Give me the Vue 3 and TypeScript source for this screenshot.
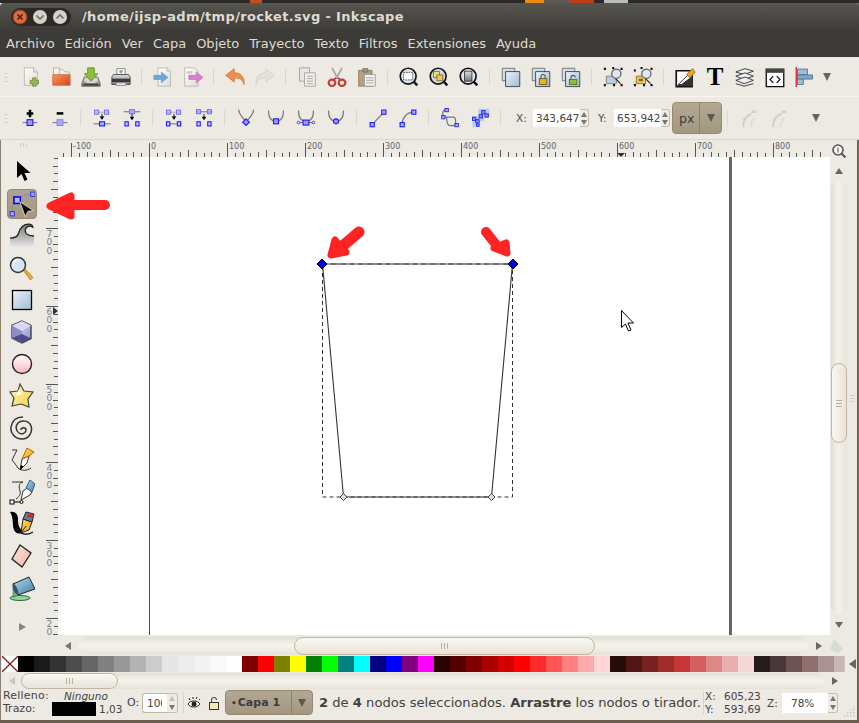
<script setup lang="ts">
const menus: string[] = ['Archivo', 'Edición', 'Ver', 'Capa', 'Objeto', 'Trayecto', 'Texto', 'Filtros', 'Extensiones', 'Ayuda']

const swatches: string[] = [
  '#000000', '#1a1a1a', '#333333', '#4d4d4d', '#666666', '#808080', '#999999', '#b3b3b3', '#cccccc', '#e6e6e6', '#ececec', '#f2f2f2', '#f9f9f9', '#ffffff',
  '#800000', '#ff0000', '#808000', '#ffff00', '#008000', '#00ff00', '#008080', '#00ffff', '#000080', '#0000ff', '#800080', '#ff00ff',
  '#2b0000', '#550000', '#800000', '#aa0000', '#d40000', '#ff0000', '#ff2a2a', '#ff5555', '#ff8080', '#ffaaaa', '#ffd5d5',
  '#280b0b', '#501616', '#782121', '#a02c2c', '#c83737', '#d35f5f', '#de8787', '#e9afaf', '#f4d7d7',
  '#241c1c', '#483737', '#6c5353', '#916f6f', '#ac9393', '#c8b7b7'
]

interface Tick { p: number; from: number }

const hTicks: Tick[] = []
for (let k = -12; k <= 86; k++) {
  const m = ((k % 10) + 10) % 10
  hTicks.push({ p: Math.round(149 + k * 7.8) + 0.5, from: m === 0 ? 3 : m === 5 ? 10 : m % 2 === 0 ? 12 : 13 })
}
const vTicks: Tick[] = []
for (let j = -9; j <= 52; j++) {
  const m = ((j % 10) + 10) % 10
  vTicks.push({ p: Math.round(228 + j * 7.8) + 0.5, from: m === 0 ? 0 : m === 5 ? 5 : m % 2 === 0 ? 7 : 8 })
}
const hLabels = [-100, 0, 100, 200, 300, 400, 500, 600, 700, 800].map((v) => ({
  text: String(v),
  x: Math.round(149 + v * 0.78) + 2
}))
const vLabels = [700, 600, 500, 400, 300, 200].map((v) => ({
  digits: String(v).split(''),
  y: Math.round(228 + (700 - v) * 0.78)
}))
</script>

<template>
  <div class="win">
    <svg class="defs" width="0" height="0">
      <defs>
        <linearGradient id="gBlue" x1="0" y1="0" x2="1" y2="1"><stop offset="0" stop-color="#eef3f8" /><stop offset="1" stop-color="#9dbcd6" /></linearGradient>
        <linearGradient id="gTeal" x1="0" y1="0" x2="1" y2="1"><stop offset="0" stop-color="#b4d8ea" /><stop offset="1" stop-color="#3f7fa6" /></linearGradient>
        <linearGradient id="gDoc" x1="0" y1="0" x2="1" y2="1"><stop offset="0" stop-color="#ffffff" /><stop offset="1" stop-color="#dfdcd6" /></linearGradient>
        <linearGradient id="gOrange" x1="0" y1="0" x2="1" y2="1"><stop offset="0" stop-color="#f79a5a" /><stop offset="1" stop-color="#d8401c" /></linearGradient>
        <linearGradient id="gGray" x1="0" y1="0" x2="0" y2="1"><stop offset="0" stop-color="#dddddd" /><stop offset="1" stop-color="#777777" /></linearGradient>
        <linearGradient id="gWave" x1="0" y1="0" x2="0" y2="1"><stop offset="0" stop-color="#777777" /><stop offset="1" stop-color="#ececec" /></linearGradient>
        <linearGradient id="gPink" x1="0" y1="0" x2="0" y2="1"><stop offset="0" stop-color="#ffffff" /><stop offset="1" stop-color="#ffb6c0" /></linearGradient>
        <linearGradient id="gPurple" x1="0" y1="0" x2="1" y2="1"><stop offset="0" stop-color="#e4e4fa" /><stop offset="1" stop-color="#8e8ed0" /></linearGradient>
        <linearGradient id="gYellow" x1="0" y1="0" x2="1" y2="1"><stop offset="0" stop-color="#ffe066" /><stop offset="1" stop-color="#f19a10" /></linearGradient>
        <linearGradient id="gStar" x1="0" y1="0" x2="1" y2="1"><stop offset="0" stop-color="#fff7c0" /><stop offset="1" stop-color="#f6cf4a" /></linearGradient>
        <linearGradient id="gSalmon" x1="0" y1="0" x2="1" y2="1"><stop offset="0" stop-color="#fbe6de" /><stop offset="1" stop-color="#eeb4a2" /></linearGradient>
      </defs>
    </svg>

    <div class="panel"></div>

    <div class="titlebar">
      <svg class="winbtns" width="60" height="18" viewBox="0 0 60 18">
        <rect x="0" y="0" width="60" height="18" rx="9" fill="#2b2a26" />
        <circle cx="9" cy="9" r="7" fill="#dd6a3c" stroke="#8d3a1a" />
        <path d="M6.5 6.5l5 5M11.5 6.5l-5 5" stroke="#4a2212" stroke-width="1.6" />
        <circle cx="29" cy="9" r="7" fill="#d6d2c9" />
        <path d="M25.5 7.5L29 11l3.5-3.5" fill="none" stroke="#6e6b63" stroke-width="1.6" />
        <circle cx="49" cy="9" r="7" fill="#d6d2c9" />
        <path d="M45.5 10.5L49 7l3.5 3.5" fill="none" stroke="#6e6b63" stroke-width="1.6" />
      </svg>
      <span class="title">/home/ijsp-adm/tmp/rocket.svg - Inkscape</span>
    </div>

    <div class="menubar">
      <span v-for="m in menus" :key="m" class="menu">{{ m }}</span>
    </div>

    <div class="toolbar tb1">
      <span class="grip"></span>
      <span class="btn"><svg viewBox="0 0 24 24"><path d="M4 1h11l5 5v16H4z" fill="url(#gDoc)" stroke="#b5b3ad" /><path d="M15 1v5h5" fill="#e8e6e0" stroke="#b5b3ad" /><path d="M14 13h4v3h3v4h-3v3h-4v-3h-3v-4h3z" fill="#92b852" stroke="#6b8f34" /></svg></span>
      <span class="btn"><svg viewBox="0 0 24 24"><path d="M6 3h8l3 3h5v6H6z" fill="#f3f0ea" stroke="#b7a898" /><path d="M3 1h7v9H3z" fill="#f5f2ec" stroke="#b7a898" /><path d="M2 9h21v13H2z" fill="url(#gOrange)" stroke="#c9805a" /></svg></span>
      <span class="btn"><svg viewBox="0 0 24 24"><path d="M4 12h16l3 8v3H1v-3z" fill="url(#gGray)" stroke="#555" /><ellipse cx="12" cy="16" rx="8" ry="3.5" fill="#d5d5d0" /><path d="M8 1h8v7h4l-8 9-8-9h4z" fill="#8fbf3a" stroke="#5f8d1e" /><rect x="3" y="20" width="18" height="2" fill="#3c3c3c" /></svg></span>
      <span class="btn"><svg viewBox="0 0 24 24"><path d="M7 2h10v7H7z" fill="#fff" stroke="#777" /><path d="M10 4h4v2l-2 2-2-2z" fill="#999" /><path d="M3 9h18l2 3v9H1v-9z" fill="url(#gGray)" stroke="#444" /><path d="M1 14h22v4H1z" fill="#3a3a3a" /><path d="M6 19h12v3H6z" fill="#f4f4f4" stroke="#777" /></svg></span>
      <span class="sep"></span>
      <span class="btn"><svg viewBox="0 0 24 24"><path d="M6 1h11l4 4v18H6z" fill="url(#gDoc)" stroke="#b5b3ad" /><path d="M17 1v4h4" fill="#e6e4de" stroke="#b5b3ad" /><path d="M1 10h9V6l8 6.5-8 6.5v-4H1z" fill="#72a4d4" stroke="#5b8fc0" stroke-width=".6" /></svg></span>
      <span class="btn"><svg viewBox="0 0 24 24"><path d="M2 1h12l4 4v18H2z" fill="url(#gDoc)" stroke="#b5b3ad" /><path d="M4 5h7v3H4z" fill="#d9c7c0" /><path d="M7 10h9V6l8 6.5-8 6.5v-4H7z" fill="#d67ed0" stroke="#b55fb0" stroke-width=".6" /></svg></span>
      <span class="sep"></span>
      <span class="btn"><svg viewBox="0 0 24 24"><path d="M1 10l10-8v5c7 0 12 3 12 14-2-6-5-8-12-8v5z" fill="#ee9050" stroke="#d2702c" /></svg></span>
      <span class="btn"><svg viewBox="0 0 24 24"><path d="M23 10L13 2v5C6 7 1 10 1 21c2-6 5-8 12-8v5z" fill="#e4e2dc" stroke="#d3d0c9" /></svg></span>
      <span class="sep"></span>
      <span class="btn"><svg viewBox="0 0 24 24"><path d="M3 1h12v16H3z" fill="#e7e7e5" stroke="#9b9b98" /><path d="M9 7h13v16H9z" fill="#f2f2f0" stroke="#9b9b98" /><path d="M11.5 11h8M11.5 14h8M11.5 17h8M11.5 20h8" stroke="#999" /></svg></span>
      <span class="btn"><svg viewBox="0 0 24 24"><path d="M6 1l7 13M18 1l-7 13" stroke="#a8a8a6" stroke-width="2.2" /><path d="M11 13l-4 3M13 13l4 3" stroke="#b52a2a" stroke-width="2" /><ellipse cx="6" cy="19" rx="4" ry="3.8" fill="none" stroke="#c43a36" stroke-width="2.6" /><ellipse cx="18" cy="19" rx="4" ry="3.8" fill="none" stroke="#c43a36" stroke-width="2.6" /></svg></span>
      <span class="btn"><svg viewBox="0 0 24 24"><path d="M2 4h16v19H2z" fill="#b89f7c" stroke="#8c7658" /><path d="M7 2h6v4H7z" fill="#a89a8a" stroke="#666" /><path d="M9 9h13v14H9z" fill="#f2f2ee" stroke="#999" /><path d="M11 13h9M11 16h9M11 19h9" stroke="#999" /></svg></span>
      <span class="sep"></span>
      <span class="btn"><svg viewBox="0 0 24 24"><path d="M17 17l5 5" stroke="#111" stroke-width="3" /><circle cx="11" cy="11" r="9.5" fill="#dbe7f0" stroke="#111" stroke-width="2" /><rect x="5.5" y="6.5" width="11" height="9" fill="#fff" stroke="#444" stroke-dasharray="2 1" /></svg></span>
      <span class="btn"><svg viewBox="0 0 24 24"><path d="M17 17l5 5" stroke="#111" stroke-width="3" /><circle cx="11" cy="11" r="9.5" fill="#cbd9e4" stroke="#111" stroke-width="2" /><rect x="5.5" y="5.5" width="7" height="7" fill="#f7dd7a" stroke="#7a6a30" /><rect x="9.5" y="9.5" width="7" height="7" fill="#f2c64a" stroke="#7a6a30" /></svg></span>
      <span class="btn"><svg viewBox="0 0 24 24"><path d="M17 17l5 5" stroke="#111" stroke-width="3" /><circle cx="11" cy="11" r="9.5" fill="#dbe7f0" stroke="#111" stroke-width="2" /><rect x="6.5" y="5" width="9" height="12" fill="url(#gGray)" stroke="#333" /></svg></span>
      <span class="sep"></span>
      <span class="btn"><svg viewBox="0 0 24 24"><path d="M1.500 1.500h15v15h-15z" fill="#cfdde9" stroke="#666" /><path d="M5.500 5.500h17v18h-17z" fill="url(#gBlue)" stroke="#333" /></svg></span>
      <span class="btn"><svg viewBox="0 0 24 24"><path d="M1.500 1.500h15v15h-15z" fill="#cfdde9" stroke="#666" /><path d="M5.500 5.500h17v18h-17z" fill="url(#gBlue)" stroke="#333" /><rect x="10" y="14" width="9" height="7" fill="#e6b422" stroke="#6b5410" /><path d="M12 14v-2.500a2.500 2.500 0 015 0V14" fill="none" stroke="#555" stroke-width="1.300" /></svg></span>
      <span class="btn"><svg viewBox="0 0 24 24"><path d="M1.500 1.500h15v15h-15z" fill="#cfdde9" stroke="#666" /><path d="M5.500 5.500h17v18h-17z" fill="url(#gBlue)" stroke="#333" /><rect x="10" y="15" width="9" height="6" fill="#8fbf3a" stroke="#4f6f1c" /><path d="M12 15v-2.500a2.500 2.500 0 015 0" fill="none" stroke="#555" stroke-width="1.300" /></svg></span>
      <span class="sep"></span>
      <span class="btn"><svg viewBox="0 0 24 24"><path d="M4 11h12v9H4z" fill="#b8cde0" stroke="#777" /><path d="M15 14l6 6" stroke="#222" stroke-width="1.500" /><circle cx="16" cy="8" r="5.500" fill="#dfe8f0" stroke="#555" stroke-width="1.400" /><path d="M1 1h2.500v2.500H1zM11 0h2.500v2.500H11zM21 1h2.500v2.500H21zM1 20.500h2.500V23H1zM12 20.500h2.500V23H12zM21 20.500h2.500V23H21z" fill="#111" /></svg></span>
      <span class="btn"><svg viewBox="0 0 24 24"><path d="M4 11h11v9H4z" fill="#f0c84a" stroke="#7a6a30" /><rect x="7" y="14" width="5" height="3" fill="#7a6a30" /><path d="M15 14l6 6" stroke="#222" stroke-width="1.500" /><circle cx="16" cy="8" r="5.500" fill="#dfe8f0" stroke="#555" stroke-width="1.400" /><path d="M1 3h2.500v2.500H1zM9 0h2.500v2.500H9zM21 1h2.500v2.500H21zM1 20.500h2.500V23H1zM12 20.500h2.500V23H12zM21 20.500h2.500V23H21z" fill="#111" /></svg></span>
      <span class="sep"></span>
      <span class="btn"><svg viewBox="0 0 24 24"><path d="M1.500 4.500h19v19h-19z" fill="#fff" stroke="#111" stroke-width="2" /><path d="M2 23L20 5v18z" fill="#333" /><path d="M4 21l12-12 4 3-12 9z" fill="#fff" stroke="#222" /><path d="M14 9l7-7 3 4-6 7z" fill="#f3a81c" stroke="#8a5a10" /></svg></span>
      <span class="btn"><svg viewBox="0 0 24 24"><text x="12" y="22" text-anchor="middle" class="bigt">T</text></svg></span>
      <span class="btn"><svg viewBox="0 0 24 24"><path d="M1 6l11-4 10 3-11 4z" fill="#eee" stroke="#222" /><path d="M1 11l11-4 10 4-11 4z" fill="#eee" stroke="#222" /><path d="M1 16l11-4 10 4-11 4z" fill="#eee" stroke="#222" /><path d="M1 20l10 3 11-3" fill="none" stroke="#222" /></svg></span>
      <span class="btn"><svg viewBox="0 0 24 24"><path d="M1.500 2.500h21v21h-21z" fill="#fff" stroke="#111" stroke-width="1.600" /><path d="M1 3h22v4H1z" fill="#444" /><path d="M10 11l-4 4 4 4M14 11l4 4-4 4" fill="none" stroke="#111" stroke-width="1.400" /></svg></span>
      <span class="btn"><svg viewBox="0 0 24 24"><path d="M1.500 0v24" stroke="#d22" stroke-width="1.600" /><path d="M3 2.500h12v7H3zM3 14h7v7H3z" fill="#9dbcd6" stroke="#4d6f8c" /><path d="M3 9.500h18v5H3z" fill="#7fa9cb" stroke="#4d6f8c" /></svg></span>
      <span class="tri"></span>
    </div>

    <div class="toolbar tb2">
      <span class="grip"></span>
      <span class="btn nb"><svg viewBox="0 0 24 24"><path d="M12 2v9M8 6.500h8" stroke="#000" stroke-width="3" /><path d="M3 17.500h18" stroke="#888" stroke-width="1.500" /><rect x="8.500" y="14" width="7" height="7" fill="#9999ff" stroke="#1a1aff" stroke-width="1.300" /></svg></span>
      <span class="btn nb"><svg viewBox="0 0 24 24"><path d="M8 6.500h8" stroke="#000" stroke-width="3" /><path d="M3 17.500h18" stroke="#888" stroke-width="1.500" /><rect x="8.500" y="14" width="7" height="7" fill="#aaaaff" stroke="#8888ee" stroke-width="1.300" /></svg></span>
      <span class="sep"></span>
      <span class="btn nb"><svg viewBox="0 0 24 24"><path d="M5 5h14" stroke="#999" /><rect x="3" y="2.500" width="5" height="5" fill="#bbbbff" stroke="#6666ee" /><rect x="15" y="2.500" width="5" height="5" fill="#bbbbff" stroke="#6666ee" /><path d="M12 7v5M10 10.500h4l-2 3z" stroke="#000" fill="#000" /><path d="M2 19h20" stroke="#888" stroke-width="1.500" /><rect x="9" y="16.500" width="6" height="5" fill="#aaaaff" stroke="#1a1aff" stroke-width="1.300" /></svg></span>
      <span class="btn nb"><svg viewBox="0 0 24 24"><path d="M2 4.500h20" stroke="#888" stroke-width="1.500" /><rect x="9" y="2" width="6" height="5" fill="#aaaaff" stroke="#6666ee" /><path d="M12 7v6M10 11h4l-2 3z" stroke="#000" fill="#000" /><rect x="3.500" y="16.500" width="4" height="5" fill="#ccccff" stroke="#1a1aff" stroke-width="1.300" /><rect x="16.500" y="16.500" width="4" height="5" fill="#ccccff" stroke="#1a1aff" stroke-width="1.300" /></svg></span>
      <span class="sep"></span>
      <span class="btn nb"><svg viewBox="0 0 24 24"><path d="M5 5h14" stroke="#999" /><rect x="3" y="2.500" width="5" height="5" fill="#bbbbff" stroke="#6666ee" /><rect x="15" y="2.500" width="5" height="5" fill="#bbbbff" stroke="#6666ee" /><path d="M12 7v5M10 10.500h4l-2 3z" stroke="#000" fill="#000" /><path d="M3 19h18" stroke="#888" stroke-width="1.500" /><rect x="3" y="16.500" width="4" height="5" fill="#ccccff" stroke="#1a1aff" stroke-width="1.300" /><rect x="16" y="16.500" width="4" height="5" fill="#ccccff" stroke="#1a1aff" stroke-width="1.300" /></svg></span>
      <span class="btn nb"><svg viewBox="0 0 24 24"><path d="M2 4.500h20" stroke="#888" stroke-width="1.500" /><rect x="3" y="2" width="5" height="5" fill="#aaaaff" stroke="#6666ee" /><rect x="16" y="2" width="5" height="5" fill="#aaaaff" stroke="#6666ee" /><path d="M12 7v6M10 11h4l-2 3z" stroke="#000" fill="#000" /><rect x="3.500" y="16.500" width="4" height="5" fill="#ccccff" stroke="#1a1aff" stroke-width="1.300" /><rect x="16.500" y="16.500" width="4" height="5" fill="#ccccff" stroke="#1a1aff" stroke-width="1.300" /></svg></span>
      <span class="sep"></span>
      <span class="btn nb"><svg viewBox="0 0 24 24"><path d="M3 2c1 7 5 8 8 14M21 2c0 6-4 8-8 14" fill="none" stroke="#777" stroke-width="1.500" /><path d="M12 13l4 4-4 4-4-4z" fill="#9999ff" stroke="#1a1aff" stroke-width="1.300" /></svg></span>
      <span class="btn nb"><svg viewBox="0 0 24 24"><path d="M3 3c0 10 4 13 9 13s9-3 9-13" fill="none" stroke="#777" stroke-width="1.500" /><rect x="9" y="13" width="6" height="6" fill="#9999ff" stroke="#1a1aff" stroke-width="1.300" /></svg></span>
      <span class="btn nb"><svg viewBox="0 0 24 24"><path d="M3 3c0 10 4 13 9 13s9-3 9-13" fill="none" stroke="#777" stroke-width="1.500" /><path d="M2 17.500h20" stroke="#555" /><rect x="8.500" y="14.500" width="7" height="6" fill="#9999ff" stroke="#1a1aff" stroke-width="1.300" /><circle cx="3" cy="17.500" r="1.600" fill="#fff" stroke="#1a1aff" /><circle cx="21" cy="17.500" r="1.600" fill="#fff" stroke="#1a1aff" /></svg></span>
      <span class="btn nb"><svg viewBox="0 0 24 24"><path d="M3 3c0 10 4 13 9 13s9-3 9-13" fill="none" stroke="#777" stroke-width="1.500" /><circle cx="12" cy="16" r="3" fill="#9999ff" stroke="#1a1aff" stroke-width="1.300" /></svg></span>
      <span class="sep"></span>
      <span class="btn nb"><svg viewBox="0 0 24 24"><path d="M5 20L19 5" stroke="#777" stroke-width="1.500" /><rect x="2.500" y="17.500" width="5" height="5" fill="#aaaaff" stroke="#1a1aff" stroke-width="1.300" /><rect x="16.500" y="2.500" width="5" height="5" fill="#aaaaff" stroke="#1a1aff" stroke-width="1.300" /></svg></span>
      <span class="btn nb"><svg viewBox="0 0 24 24"><path d="M5 20c0-8 5-15 14-15" fill="none" stroke="#777" stroke-width="1.500" /><rect x="2.500" y="17.500" width="5" height="5" fill="#aaaaff" stroke="#1a1aff" stroke-width="1.300" /><rect x="16.500" y="2.500" width="5" height="5" fill="#aaaaff" stroke="#1a1aff" stroke-width="1.300" /></svg></span>
      <span class="sep"></span>
      <span class="btn nb"><svg viewBox="0 0 24 24"><path d="M7 2c-5 1-5 9 0 9h9c4 0 3 10 1 10h-5c-3 0-4-4-4-10" fill="none" stroke="#777" stroke-width="1.500" /><rect x="6" y="0.500" width="4" height="4" fill="#aaaaff" stroke="#1a1aff" /><rect x="2" y="9" width="4" height="4" fill="#aaaaff" stroke="#1a1aff" /><rect x="18" y="18.500" width="4" height="4" fill="#aaaaff" stroke="#1a1aff" /></svg></span>
      <span class="btn nb"><svg viewBox="0 0 24 24"><path d="M10 1h13v8H17v7h-6l-3 7H3V10h7z" fill="#b8cde0" /><g fill="#8888ff" stroke="#1a1aff"><rect x="3" y="11" width="4" height="4" /><rect x="7" y="14" width="4" height="4" /><rect x="11" y="8" width="4" height="4" /><rect x="14" y="3" width="4" height="4" /><rect x="18" y="7" width="4" height="4" /><rect x="8" y="19" width="3" height="3" /></g></svg></span>
      <span class="sep"></span>
      <span class="lbl xl">X:</span>
      <span class="entry xe">343,647</span><span class="spin"><i class="up"></i><i class="down"></i></span>
      <span class="lbl yl">Y:</span>
      <span class="entry ye">653,942</span><span class="spin"><i class="up"></i><i class="down"></i></span>
      <span class="combo unit"><span class="ctext">px</span><span class="carrow"><i class="tri dark"></i></span></span>
      <span class="sep lastsep"></span>
      <span class="btn off"><svg viewBox="0 0 24 24"><path d="M5 23c0-9 4-14 10-16" fill="none" stroke="#d3d0c8" stroke-width="2.500" /><path d="M14 23c0-5 2-9 5-11" fill="none" stroke="#e0ddd6" stroke-width="2" /><rect x="15" y="3" width="6" height="3" fill="#d3d0c8" /><rect x="3" y="11" width="3" height="3" fill="#dedbd3" /></svg></span>
      <span class="btn off"><svg viewBox="0 0 24 24"><path d="M5 23c0-9 4-14 10-16" fill="none" stroke="#d3d0c8" stroke-width="2.500" /><path d="M14 23c0-5 2-9 5-11" fill="none" stroke="#e0ddd6" stroke-width="2" /><rect x="15" y="3" width="6" height="3" fill="#d3d0c8" /></svg></span>
      <span class="tri tri2"></span>
    </div>

    <div class="work">
      <div class="toolbox">
        <span class="grip-h"></span>
        <span class="tool"><svg viewBox="0 0 24 24" width="24" height="24"><path d="M7 1v17l4.500-4 3 7 3-1.500-3-6.500h6z" fill="#000" /></svg></span>
        <span class="tool active"><svg viewBox="0 0 24 24" width="26" height="26"><path d="M3 20c0-6 0-9 2-12M9 6c3-2 6-3 12-3" fill="none" stroke="#8b8f99" /><rect x="1" y="19" width="4" height="4" fill="#a8a8e0" stroke="#3a3aee" /><rect x="20" y="1" width="4" height="4" fill="#a8a8e0" stroke="#3a3aee" /><rect x="4.500" y="5.500" width="6" height="6" fill="#b4b4ee" stroke="#0000ff" stroke-width="1.400" /><path d="M10 10l12.500 8-5 .8-2.500 4.700z" fill="#000" stroke="#f4f1ea" stroke-width=".7" /></svg></span>
        <span class="tool"><svg viewBox="0 0 24 24" width="26" height="26"><path d="M1 23V14C5 14 8 13 9 9C10 4 14 1 18 1C21 1 22 3 22 4C19 2 15 3 15 7C15 11 20 12 23 12V23z" fill="url(#gWave)" /><path d="M1 14C5 14 8 13 9 9C10 4 14 1 18 1C21 1 22 3 22 4C19 2 15 3 15 7C15 11 20 12 23 12" fill="none" stroke="#222" stroke-width="1.200" /></svg></span>
        <span class="tool"><svg viewBox="0 0 26 26" width="26" height="26"><path d="M14 15l2-1 8 8.500-2.500 2.500z" fill="#f0a828" stroke="#b87a18" stroke-width=".8" /><circle cx="9" cy="10" r="7.500" fill="#d5e7f4" stroke="#333" stroke-width="1.500" /><path d="M4.500 9.500a5 5 0 015-5" fill="none" stroke="#fff" stroke-width="1.500" /></svg></span>
        <span class="tool"><svg viewBox="0 0 24 24" width="24" height="24"><rect x="2.500" y="2.500" width="19" height="19" fill="url(#gBlue)" stroke="#000" stroke-width="1.300" /></svg></span>
        <span class="tool"><svg viewBox="0 0 24 24" width="24" height="24"><path d="M12 1l9 4.500v13L12 23l-10-5V5.500z" fill="url(#gPurple)" stroke="#333" stroke-width="1.300" /><path d="M2 5.500L12 11v12l-10-5z" fill="#8c8cc8" /><path d="M2 18l10-4 9 4.500-9 4.500z" fill="#4c4c8c" /><path d="M12 1l9 4.500L12 11 2 5.500z" fill="#d8d8f4" /></svg></span>
        <span class="tool"><svg viewBox="0 0 24 24" width="24" height="24"><circle cx="12" cy="12" r="9.500" fill="url(#gPink)" stroke="#222" stroke-width="1.400" /></svg></span>
        <span class="tool"><svg viewBox="0 0 26 26" width="26" height="26"><path d="M11 1l4 7 9 1-5 7 1 8-8-3-9 2 2-8L1 9l8-1z" fill="url(#gStar)" stroke="#444" stroke-width="1.200" /><path d="M10 6l3 5-6 2z" fill="#fffbe6" /></svg></span>
        <span class="tool"><svg viewBox="0 0 24 24" width="24" height="24"><path d="M11 14c0-3 5-3 5 0s-4 5-7 3-4-7-1-10 11-3 13 3-2 13-9 13S0 17 1 11 6 1 13 1" fill="none" stroke="#333" stroke-width="1.500" /></svg></span>
        <span class="tool"><svg viewBox="0 0 26 26" width="26" height="26"><path d="M3 3H8L3 13L7 18L9 21C12 24 18 24 22 21" fill="none" stroke="#333" /><path d="M11 23L13 12L20 9L18 16z" fill="#fff" stroke="#333" /><path d="M13 12L18 1L25 5L20 9z" fill="url(#gYellow)" stroke="#a56a10" /><path d="M11 23l1-5 2.500 1.500z" fill="#000" /></svg></span>
        <span class="tool"><svg viewBox="0 0 26 26" width="26" height="26"><path d="M3 3h11c-5 1-4 6-3 9s-1 6-4 8" fill="none" stroke="#333" /><rect x="1" y="21" width="4" height="4" fill="#fff" stroke="#000" /><path d="M5 23h6" stroke="#000" /><circle cx="12.500" cy="23" r="1.500" fill="#fff" stroke="#000" /><path d="M12 21l2-9 4-3 5 4-2 3z" fill="#fff" stroke="#333" /><path d="M17 9l4-8 5 4-3 8z" fill="url(#gTeal)" stroke="#2f5f80" /></svg></span>
        <span class="tool"><svg viewBox="0 0 26 26" width="26" height="26"><path d="M1 1C6 0 9 3 9 8C9 14 10 17 14 20C11 24 7 23 5 19C3 14 5 7 1 1z" fill="#000" /><path d="M10 21C14 24 20 24 24 21" fill="none" stroke="#222" stroke-width="1.500" /><path d="M12 22L14 8L23 11L20 19z" fill="url(#gYellow)" stroke="#222" /><path d="M14 8L17 1L25 3L23 11z" fill="#5f7f9f" stroke="#222" /><path d="M19 3L25 4L24 7L18 6z" fill="#d22" /><path d="M12 22l5-7" stroke="#222" /></svg></span>
        <span class="tool"><svg viewBox="0 0 24 24" width="24" height="24"><path d="M10 1l11 8-9 14L2 15z" fill="url(#gSalmon)" stroke="#222" stroke-width="1.300" /></svg></span>
        <span class="tool"><svg viewBox="0 0 26 26" width="26" height="26"><ellipse cx="11" cy="23" rx="10" ry="2.500" fill="#96d29a" stroke="#2a6a35" /><path d="M4 8v14h2V10" fill="#7bc485" stroke="#2a6a35" stroke-width=".6" /><path d="M4 9L20 2L26 14L9 20z" fill="url(#gTeal)" stroke="#222" /><ellipse cx="6.500" cy="14.500" rx="2" ry="6" transform="rotate(-22 6.500 14.500)" fill="#35526c" /></svg></span>
        <span class="toolmore"><span class="tri-r"></span></span>
      </div>

      <svg class="rulercorner" width="12" height="17"></svg>

      <svg class="hruler" width="772" height="17" viewBox="58 0 772 17">
        <path v-for="t in hTicks" :key="t.p" :d="`M${t.p} ${t.from}V17`" stroke="#555" fill="none" />
        <text v-for="l in hLabels" :key="l.text" :x="l.x" y="9" class="rtext">{{ l.text }}</text>
        <path d="M617 13h8l-4 4z" fill="#333" />
      </svg>

      <svg class="vruler" width="12" height="478" viewBox="0 157 12 478">
        <path v-for="t in vTicks" :key="t.p" :d="`M${t.from} ${t.p}H12`" stroke="#555" fill="none" />
        <g v-for="l in vLabels" :key="l.y">
          <text v-for="(d, i) in l.digits" :key="i" x="0.500" :y="l.y + 9 + i * 8.300" class="rtext vt">{{ d }}</text>
        </g>
        <path d="M7 307l5 4-5 4z" fill="#333" />
      </svg>

      <svg class="canvas" width="772" height="478" viewBox="58 157 772 478">
        <rect x="58" y="157" width="772" height="478" fill="#fff" />
        <rect x="149" y="157" width="1" height="478" fill="#555" />
        <rect x="729" y="157" width="3" height="478" fill="#666" />
        <rect x="322.500" y="264" width="190" height="233" fill="none" stroke="#333" stroke-dasharray="4 3" />
        <path d="M322.500 264L343.500 497H491.500L512.500 264" fill="none" stroke="#333" stroke-width="1.100" />
        <path d="M322.500 264H512.500" fill="none" stroke="#888" stroke-width="1.500" />
        <path d="M322.500 264H512.500" fill="none" stroke="#444" stroke-dasharray="5 4" />
        <path d="M322 259l5 5-5 5-5-5z" fill="#0000ee" stroke="#000" />
        <path d="M513 259l5 5-5 5-5-5z" fill="#0000ee" stroke="#000" />
        <path d="M343.500 493.500l3.500 3.500-3.500 3.500-3.500-3.500z" fill="#ddd" stroke="#444" />
        <path d="M491.500 493.500l3.500 3.500-3.500 3.500-3.500-3.500z" fill="#ddd" stroke="#444" />
        <g fill="#ff2424" stroke="#ff2424" stroke-linejoin="round" stroke-linecap="round">
          <path d="M359 232L338 250" stroke-width="11" fill="none" />
          <path d="M335 240L331 255 346 252z" stroke-width="7" />
          <path d="M486 232L498 247" stroke-width="10" fill="none" />
          <path d="M506 243L507 253 494 248z" stroke-width="7" />
        </g>
        <path d="M621.500 310.500v17l4-3.500 3 7 2.500-1-3-7h5.500z" fill="#fff" stroke="#000" />
      </svg>

      <div class="vscroll">
        <svg class="zoomcorner" viewBox="0 0 16 16" width="16" height="16"><path d="M10.500 10.500l4 4" stroke="#555" stroke-width="2" /><circle cx="7" cy="7" r="5" fill="#f5f3ee" stroke="#555" stroke-width="1.600" /><path d="M7 4.500v5" stroke="#555" /></svg>
        <span class="arrow-u"></span>
        <div class="vtrough"><div class="vspace a"></div><div class="vthumb"><i></i><i></i><i></i></div><div class="vspace"></div></div>
        <span class="arrow-d"></span>
      </div>
      <div class="rightstrip"><i></i><i></i><i></i></div>
    </div>

    <div class="hscrollrow">
      <span class="arrow-l ml"></span>
      <div class="htrough"><div class="hthumb"><i></i><i></i><i></i></div></div>
      <span class="arrow-r ar1"></span>
      <svg class="sticky" viewBox="0 0 16 16" width="16" height="16"><path d="M6 1l9 10-5 4-8-3z" fill="#d6dcd8" stroke="#e4e2dc" /></svg>
    </div>

    <div class="palette">
      <svg class="none" width="16" height="16" viewBox="0 0 16 16"><rect width="16" height="16" fill="#fff" /><path d="M0 0l16 16M16 0L0 16" stroke="#7a1a1a" stroke-width="1.300" /></svg>
      <div class="swatches"><span v-for="(c, i) in swatches" :key="i" class="sw" :style="{ background: c }"></span></div>
      <span class="arrow-l big"></span>
    </div>

    <div class="palscroll">
      <span class="arrow-l pale"></span>
      <div class="ptrough"><div class="pthumb"><i></i><i></i><i></i></div></div>
      <span class="arrow-r ar2"></span>
    </div>

    <div class="status">
      <div class="fs">
        <div class="fsrow"><span class="fsl">Relleno:</span><em>Ninguno</em></div>
        <div class="fsrow"><span class="fsl2">Trazo:</span><span class="strokebox"></span><span class="sw-w">1,03</span></div>
      </div>
      <span class="olbl">O:</span>
      <span class="oentry"><span>100</span></span><span class="spin ospin"><i class="up pale"></i><i class="down"></i></span>
      <span class="vsep"></span>
      <svg class="eye" width="14" height="12" viewBox="0 0 14 12"><path d="M1 7c2-4 10-4 12 0-2 4-10 4-12 0z" fill="#fff" stroke="#222" /><circle cx="7" cy="7" r="2.500" fill="#222" /><path d="M3 3L2 1M6 2V0M9 2l1-2M12 3l1-1" stroke="#222" /></svg>
      <svg class="lock" width="12" height="14" viewBox="0 0 12 14"><rect x="1.500" y="6.500" width="9" height="7" fill="#f3e9b5" stroke="#333" /><path d="M3.500 6.500V4a2.500 2.500 0 015 0" fill="none" stroke="#555" stroke-width="1.200" /></svg>
      <span class="combo layer"><span class="ctext"><b class="dot">•</b>Capa 1</span><span class="carrow"><i class="tri dark"></i></span></span>
      <span class="msg"><b>2</b> de <b>4</b> nodos seleccionados. <b>Arrastre</b> los nodos o tirador.</span>
      <span class="vsep s2"></span>
      <div class="coords">
        <div class="crow"><span class="cl">X:</span><span>605,23</span></div>
        <div class="crow"><span class="cl">Y:</span><span>593,69</span></div>
      </div>
      <span class="zlbl">Z:</span>
      <span class="zentry">78%</span><span class="spin zspin"><i class="up"></i><i class="down"></i></span>
      <svg class="resize" width="12" height="12" viewBox="0 0 12 12"><g fill="#cfcabd"><rect x="9" y="1" width="1.500" height="1.500" /><rect x="6" y="4" width="1.500" height="1.500" /><rect x="9" y="4" width="1.500" height="1.500" /><rect x="3" y="7" width="1.500" height="1.500" /><rect x="6" y="7" width="1.500" height="1.500" /><rect x="9" y="7" width="1.500" height="1.500" /><rect x="0" y="10" width="1.500" height="1.500" /><rect x="3" y="10" width="1.500" height="1.500" /><rect x="6" y="10" width="1.500" height="1.500" /><rect x="9" y="10" width="1.500" height="1.500" /></g></svg>
    </div>
    <div class="bottomedge"></div>

    <svg class="bigarrow" width="70" height="34" viewBox="0 0 70 34">
      <g fill="#ff2424" stroke="#ff2424" stroke-linejoin="round" stroke-linecap="round">
        <path d="M63 17H24" stroke-width="10" fill="none" />
        <path d="M8 18L29 8V28z" stroke-width="7" />
      </g>
    </svg>
  </div>
</template>

<style scoped>
.win {
  position: relative;
  width: 859px;
  height: 723px;
  display: flex;
  flex-direction: column;
  overflow: hidden;
  background: linear-gradient(90deg, #edeae3 857px, #6f6557 857px);
  font-family: "DejaVu Sans", sans-serif;
  color: #3c3c3c;
}
.defs { position: absolute; }
.panel {
  height: 3px;
  flex: none;
  background: linear-gradient(90deg, #2c2a26 0 250px, #c2501c 250px 262px, #2c2a26 262px 525px, #ef8a12 525px 544px, #5c5a55 544px 570px, #c03c18 570px 594px, #2c2a26 594px 604px, #bbb 604px 628px, #2c2a26 628px);
}
.titlebar {
  height: 27px;
  flex: none;
  display: flex;
  align-items: center;
  padding-left: 11px;
  box-sizing: border-box;
  background: linear-gradient(#56554f, #3d3c38);
  border-radius: 4px 4px 0 0;
}
.winbtns { flex: none; }
.title {
  margin-left: 11px;
  font-weight: bold;
  font-size: 13px;
  color: #dfdbd2;
  white-space: nowrap;
  letter-spacing: .35px;
}
.menubar {
  height: 27px;
  flex: none;
  display: flex;
  align-items: center;
  padding-left: 6px;
  gap: 10px;
  background: #3c3b37;
  font-size: 13px;
  color: #dfdbd2;
  white-space: nowrap;
}
.toolbar {
  flex: none;
  display: flex;
  align-items: center;
  position: relative;
  box-sizing: border-box;
}
.tb1 {
  height: 40px;
  padding-left: 16px;
  background: #edeae3;
  border-bottom: 1px solid #f7f5f0;
}
.tb2 {
  height: 43px;
  padding-left: 15px;
  background: #edeae3;
  border-bottom: 1px solid #dcd7ca;
}
.grip {
  position: absolute;
  left: 4px;
  top: 50%;
  width: 4px;
  height: 7px;
  margin-top: -4px;
  border-top: 1px solid #d6d1c4;
  border-bottom: 1px solid #d6d1c4;
}
.grip::after {
  content: "";
  display: block;
  margin-top: 3px;
  border-top: 1px solid #d6d1c4;
}
.btn {
  width: 30px;
  height: 24px;
  flex: none;
  display: flex;
  align-items: center;
  justify-content: center;
}
.btn svg { width: 20px; height: 20px; overflow: visible; }
.sep {
  width: 12px;
  height: 20px;
  flex: none;
  position: relative;
}
.sep::after {
  content: "";
  position: absolute;
  left: 5px;
  top: 2px;
  bottom: 2px;
  width: 1px;
  background: #dcd8cd;
}
.bigt {
  font-family: "Liberation Serif", serif;
  font-weight: bold;
  font-size: 30px;
  fill: #000;
}
.tri {
  display: inline-block;
  margin-left: 0;
  width: 0;
  height: 0;
  flex: none;
  border-left: 4.5px solid transparent;
  border-right: 4.5px solid transparent;
  border-top: 8px solid #6b675f;
}
.tb1 .tri { margin-left: 3px; }
.tri2 { margin-left: 18px; }
.lbl { font-size: 10.5px; flex: none; color: #4a4a4a; }
.xl { margin-left: 9px; width: 17px; }
.yl { margin-left: 9px; width: 16px; }
.entry {
  width: 47px;
  height: 18px;
  box-sizing: border-box;
  flex: none;
  background: #fff;
  font-size: 10.5px;
  line-height: 18px;
  padding-left: 3px;
  white-space: nowrap;
  overflow: hidden;
  color: #444;
}
.spin {
  width: 9px;
  height: 18px;
  box-sizing: border-box;
  flex: none;
  display: flex;
  flex-direction: column;
  align-items: center;
  justify-content: space-around;
  border: 1px solid #c7bda9;
  border-left: none;
  border-radius: 0 3px 3px 0;
  background: #efece5;
}
.spin i { display: block; width: 0; height: 0; border-left: 3.5px solid transparent; border-right: 3.5px solid transparent; }
.spin .up { border-bottom: 5px solid #777; }
.spin .down { border-top: 5px solid #777; }
.spin .up.pale { border-bottom-color: #c4c0b6; }
.combo {
  flex: none;
  display: flex;
  box-sizing: border-box;
  background: linear-gradient(#b3a894, #a3977f);
  border: 1px solid #97896f;
  border-radius: 4px;
  color: #3c3c3c;
}
.ctext { display: flex; align-items: center; }
.carrow {
  display: flex;
  align-items: center;
  justify-content: center;
  border-left: 1px solid #8d806a;
}
.tri.dark { border-top-color: #5d584d; }
.unit { width: 50px; height: 32px; margin-left: 2px; }
.unit .ctext { width: 26px; padding-left: 6px; box-sizing: border-box; font-size: 12.5px; }
.unit .carrow { flex: 1; }

.work {
  flex: none;
  height: 497px;
  display: grid;
  grid-template-columns: 46px 12px 772px 18px 9px;
  grid-template-rows: 17px 478px 2px;
}
.toolbox {
  grid-row: 1 / 4;
  grid-column: 1;
  display: flex;
  flex-direction: column;
  align-items: center;
  border-left: 1px solid #8a8070;
  box-sizing: border-box;
  padding-right: 3px;
  padding-top: 3px;
  position: relative;
}
.grip-h {
  width: 7px;
  height: 4px;
  margin: 0 0 10px;
  flex: none;
  margin-left: 2px;
  background: repeating-linear-gradient(90deg, #d3cec1 0 1px, transparent 1px 3px);
}
.tool {
  width: 30px;
  height: 30px;
  margin-bottom: 2px;
  flex: none;
  display: flex;
  align-items: center;
  justify-content: center;
  box-sizing: border-box;
}
.tool.active {
  background: linear-gradient(#aea38f, #a4987f);
  border: 1px solid #97896f;
  border-radius: 4px;
}
.toolmore { flex: none; height: 28px; margin-top: 8px; display: flex; align-items: center; }
.tri-r { width: 0; height: 0; border-top: 4px solid transparent; border-bottom: 4px solid transparent; border-left: 7px solid #8a867d; }
.rulercorner { grid-row: 1; grid-column: 2; }
.hruler { grid-row: 1; grid-column: 3; }
.vruler { grid-row: 2; grid-column: 2; }
.canvas { grid-row: 2; grid-column: 3; display: block; }
.rtext {
  font-family: "DejaVu Sans", sans-serif;
  font-size: 8px;
  fill: #5f6468;
}
.vt { fill: #7b7f88; font-size: 9px; }
.vscroll {
  grid-row: 1 / 4;
  grid-column: 4;
  display: flex;
  flex-direction: column;
  align-items: center;
  padding-top: 3px;
  box-sizing: border-box;
}
.zoomcorner { flex: none; }
.arrow-u { margin-top: 9px; width: 0; height: 0; flex: none; border-left: 4px solid transparent; border-right: 4px solid transparent; border-bottom: 6px solid #6b675f; }
.arrow-d { margin-top: 8px; width: 0; height: 0; flex: none; border-left: 4px solid transparent; border-right: 4px solid transparent; border-top: 6px solid #6b675f; }
.vtrough {
  flex: none;
  margin-top: 7px;
  width: 16px;
  height: 433px;
  box-sizing: border-box;
  border-radius: 8px;
  background: linear-gradient(90deg, #e4dfd4, #f5f2ec 45%, #e8e4da);
  display: flex;
  flex-direction: column;
}
.vspace { flex: 1; }
.vspace.a { flex: none; height: 182px; }
.vthumb {
  flex: none;
  height: 80px;
  box-sizing: border-box;
  border: 1px solid #c2b69f;
  border-radius: 8px;
  background: linear-gradient(90deg, #f9f7f2, #e9e4da);
  display: flex;
  flex-direction: column;
  align-items: center;
  justify-content: center;
  gap: 2px;
}
.vthumb i { display: block; width: 6px; height: 1px; background: #b9b09d; }
.rightstrip {
  grid-row: 1 / 4;
  grid-column: 5;
  display: flex;
  flex-direction: column;
  justify-content: flex-start;
  gap: 2px;
  padding-top: 255px;
  box-sizing: border-box;
}
.rightstrip i { display: block; width: 5px; height: 1px; margin-left: 2px; background: #d5d0c3; }
.hscrollrow {
  height: 18px;
  flex: none;
  display: flex;
  align-items: center;
  border-left: 1px solid #8a8070;
  box-sizing: border-box;
  position: relative;
}
.arrow-l { width: 0; height: 0; flex: none; border-top: 4px solid transparent; border-bottom: 4px solid transparent; border-right: 6px solid #6b675f; }
.arrow-r { width: 0; height: 0; flex: none; border-top: 4px solid transparent; border-bottom: 4px solid transparent; border-left: 6px solid #6b675f; }
.arrow-l.ml { margin-left: 64px; border-right-color: #777; }
.htrough {
  flex: none;
  margin-left: 7px;
  width: 730px;
  height: 18px;
  border-radius: 9px;
  background: linear-gradient(#e4dfd4, #f6f3ed 45%, #e7e3d9);
  padding-left: 216px;
  box-sizing: border-box;
}
.hthumb {
  width: 301px;
  height: 18px;
  box-sizing: border-box;
  border: 1px solid #c2b69f;
  border-radius: 9px;
  background: linear-gradient(#f9f7f2, #e9e4da);
  display: flex;
  align-items: center;
  justify-content: center;
  gap: 2px;
}
.hthumb i, .pthumb i { display: block; width: 1px; height: 6px; background: #b9b09d; }
.ar1 { margin-left: 8px; }
.sticky { margin-left: 6px; flex: none; }
.palette {
  height: 18px;
  flex: none;
  display: flex;
  align-items: center;
  box-sizing: border-box;
  border-left: 1px solid #8a8070;
  padding-left: 1px;
}
.none { flex: none; display: block; }
.swatches {
  width: 827px;
  height: 16px;
  display: flex;
  overflow: hidden;
  flex: none;
  border-right: 1px solid #d0c8b8;
  box-sizing: border-box;
}
.sw { width: 16px; height: 16px; flex: none; }
.arrow-l.big { margin-left: 4px; border-top-width: 5px; border-bottom-width: 5px; border-right-width: 7px; }
.palscroll {
  height: 16px;
  flex: none;
  display: flex;
  align-items: center;
  border-left: 1px solid #8a8070;
  box-sizing: border-box;
}
.arrow-l.pale { margin-left: 8px; border-right-color: #c9c5bb; }
.ptrough {
  flex: none;
  margin-left: 6px;
  width: 804px;
  height: 16px;
  border-radius: 8px;
  background: linear-gradient(#e4dfd4, #f6f3ed 45%, #e7e3d9);
}
.pthumb {
  width: 97px;
  height: 16px;
  box-sizing: border-box;
  border: 1px solid #c2b69f;
  border-radius: 8px;
  background: linear-gradient(#f9f7f2, #e9e4da);
  display: flex;
  align-items: center;
  justify-content: center;
  gap: 2px;
}
.ar2 { margin-left: 7px; }
.status {
  height: 31px;
  flex: none;
  display: flex;
  align-items: center;
  box-sizing: border-box;
  border-left: 1px solid #8a8070;
  padding-bottom: 4px;
  font-size: 10.5px;
  color: #444;
  position: relative;
}
.fs { margin-left: 2px; width: 124px; flex: none; align-self: flex-start; }
.fsrow { display: flex; align-items: center; height: 13px; white-space: nowrap; }
.fsl { width: 61px; font-size: 11px; letter-spacing: .2px; }
.fsl2 { width: 49px; font-size: 11px; }
.fsrow em { font-size: 10.5px; }
.strokebox { width: 44px; height: 14px; background: #000; flex: none; }
.sw-w { margin-left: 3px; }
.olbl { flex: none; width: 15px; font-size: 11px; }
.oentry {
  flex: none;
  width: 25px;
  height: 20px;
  box-sizing: border-box;
  background: #fff;
  border: 1px solid #c2b69f;
  border-right: none;
  border-radius: 3px 0 0 3px;
  overflow: hidden;
  line-height: 18px;
  padding-left: 4px;
  font-size: 10.5px;
  white-space: nowrap;
}
.oentry span { display: block; width: 15px; overflow: hidden; }
.ospin { width: 11px; height: 20px; }
.vsep { flex: none; width: 1px; height: 22px; margin-left: 5px; background: #d8d3c6; }
.eye { flex: none; margin-left: 3px; }
.lock { flex: none; margin-left: 7px; }
.combo.layer { margin-left: 5px; width: 88px; height: 25px; flex: none; }
.layer .ctext { width: 65px; padding-left: 5px; box-sizing: border-box; font-weight: bold; font-size: 11px; white-space: nowrap; }
.dot { font-size: 9px; margin-right: 1px; }
.layer .carrow { flex: 1; }
.msg {
  flex: none;
  margin-left: 6px;
  width: 381px;
  font-size: 13.1px;
  white-space: nowrap;
  color: #404040;
}
.vsep.s2 { margin-left: 3px; }
.coords { flex: none; margin-left: 1px; width: 62px; font-size: 10.5px; }
.crow { display: flex; height: 13px; align-items: center; white-space: nowrap; }
.cl { width: 19px; flex: none; }
.zlbl { flex: none; width: 15px; font-size: 10.5px; }
.zentry {
  flex: none;
  width: 46px;
  height: 20px;
  line-height: 20px;
  padding-left: 9px;
  background: #fff;
  font-size: 10.5px;
  box-sizing: border-box;
}
.zspin { width: 10px; height: 20px; }
.resize { flex: none; margin-left: 6px; margin-top: 16px; }
.bottomedge { flex: 1; background: #6a5f50; }
.bigarrow { position: absolute; left: 42px; top: 188px; pointer-events: none; }
</style>

<style>
html, body { margin: 0; background: #2c2a26; }
</style>
